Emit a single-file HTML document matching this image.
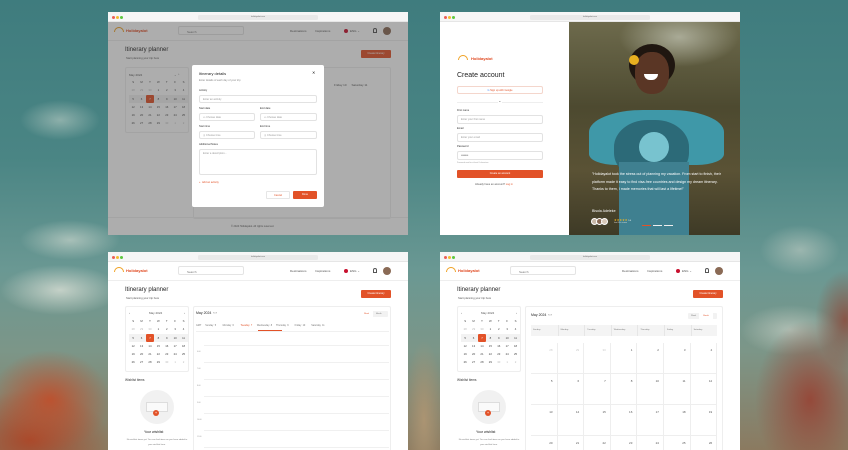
<!DOCTYPE html>
<html><head><meta charset="utf-8"><style>
*{box-sizing:border-box;margin:0;padding:0}
body{width:848px;height:450px;overflow:hidden;position:relative;font-family:"Liberation Sans",sans-serif;
background:
radial-gradient(ellipse 60px 50px at 50px 400px,rgba(190,80,45,.95),transparent),
radial-gradient(ellipse 80px 50px at 30px 440px,rgba(170,70,40,.95),transparent),
radial-gradient(ellipse 55px 80px at 810px 400px,rgba(150,70,55,.95),transparent),
radial-gradient(ellipse 30px 50px at 845px 320px,rgba(140,70,55,.8),transparent),
radial-gradient(ellipse 60px 25px at 60px 290px,rgba(225,228,218,.75),transparent),
radial-gradient(ellipse 50px 20px at 70px 240px,rgba(215,222,212,.6),transparent),
radial-gradient(ellipse 50px 25px at 790px 330px,rgba(210,215,205,.6),transparent),
radial-gradient(ellipse 40px 25px at 800px 250px,rgba(210,215,205,.5),transparent),
radial-gradient(ellipse 40px 20px at 60px 120px,rgba(210,220,210,.5),transparent),
radial-gradient(ellipse 20px 80px at 424px 420px,rgba(175,150,115,.9),transparent),
linear-gradient(180deg,#3f7c7e 0%,#4a8584 35%,#6a9893 60%,#7c9688 78%,#8b7a60 100%);}
.win{position:absolute;width:300px;background:#fff;overflow:hidden}
.chrome{position:absolute;left:0;top:0;width:300px;height:10px;background:#f6f6f6;border-bottom:1px solid #e6e6e6}
.tl{position:absolute;top:4px;width:3px;height:3px;border-radius:50%}
.url{position:absolute;left:90px;top:2.5px;width:120px;height:5px;background:#e9e9e9;border-radius:1.5px;font-size:2px;color:#666;text-align:center;line-height:5px}
.ab{position:absolute}
.t3{font-size:3px;color:#555}
.nav{position:absolute;left:0;top:10px;width:300px;height:19px;border-bottom:1px solid #eee}
.logo{position:absolute;left:18px;top:6px;font-size:4px;font-weight:bold;color:#e04a22}
.sun{position:absolute;left:-13px;top:-1px;width:10px;height:5px;border-radius:5px 5px 0 0;border:1.2px solid #f0a020;border-bottom:none}
.search{position:absolute;left:70px;top:4px;width:66px;height:9px;border:1px solid #e4e4e4;border-radius:2px;font-size:3px;color:#777;padding:2.5px 0 0 8px}
.btn{position:absolute;background:#e25228;color:#fff;font-size:2.5px;text-align:center;border-radius:1px}
.card{position:absolute;border:1px solid #eee;border-radius:2px;background:#fff}
.mc{display:grid;grid-template-columns:repeat(7,8.4px);grid-auto-rows:8.3px;position:absolute;left:3px;top:13px;font-size:2.8px;color:#444;text-align:center;line-height:8.3px}
.mc .g{color:#bbb}.mc .h{background:#f2f2f2}.mc .s{background:#e25228;color:#fff;border-radius:1px}
.ov{position:absolute;left:0;top:10px;width:300px;height:213px;background:rgba(60,60,60,.42)}
.inp{position:absolute;border:1px solid #e2e2e2;border-radius:2px;font-size:2.6px;color:#999;padding:2.3px 0 0 3px;background:#fff}
.lbl{position:absolute;font-size:2.6px;color:#333}
.hl{position:absolute;height:1px;background:#f0f0f0}
.mg{position:absolute;left:91px;top:91px;display:grid;grid-template-columns:repeat(7,26.6px);grid-auto-rows:31px}
.mg div{border-right:1px solid #eee;border-bottom:1px solid #eee;font-size:3px;color:#555;text-align:right;padding:5px 4px 0 0}
.mg .g{color:#ccc}
</style></head><body>

<!-- ============ TOP LEFT (modal) ============ -->
<div class="win" style="left:108px;top:12px;height:223px">
<div class="chrome"><i class="tl" style="left:4px;background:#ec5f57"></i><i class="tl" style="left:8px;background:#f5bd2f"></i><i class="tl" style="left:12px;background:#5fc73f"></i><div class="url">holidayalot.com</div></div>
<div class="nav"><div class="logo"><i class="sun" style="left:-12px"></i>Holidayalot</div><div class="search">Search</div>
<div class="ab t3" style="left:182px;top:7px">Destinations</div><div class="ab t3" style="left:207px;top:7px">Inspirations</div>
<div class="ab" style="left:236px;top:7px;width:4px;height:4px;border-radius:50%;background:#c8102e"></div><div class="ab t3" style="left:242px;top:7px">ENG ⌄</div>
<div class="ab" style="left:265px;top:6px;width:4px;height:5px;border:0.8px solid #555;border-radius:2px 2px 0 0"></div>
<div class="ab" style="left:275px;top:5px;width:8px;height:8px;border-radius:50%;background:#8a6a55"></div></div>
<div class="ab" style="left:17px;top:35px;font-size:6px;color:#222">Itinerary planner</div>
<div class="ab t3" style="left:18px;top:45px;font-size:2.7px">Start planning your trip here</div>
<div class="btn" style="left:253px;top:38px;width:30px;height:8px;line-height:8px">Create itinerary</div>
<div class="card" style="left:17px;top:55px;width:64px;height:66px"><div class="ab t3" style="left:3px;top:5px">May 2024</div><div class="ab t3" style="left:48px;top:5px">⌄ ⌃</div>
<div class="mc" style="top:10px"><span>S</span><span>M</span><span>T</span><span>W</span><span>T</span><span>F</span><span>S</span><span class="g">28</span><span class="g">29</span><span class="g">30</span><span>1</span><span>2</span><span>3</span><span>4</span><span class="h">5</span><span class="h">6</span><span class="s">7</span><span class="h">8</span><span class="h">9</span><span class="h">10</span><span class="h">11</span><span>12</span><span>13</span><span>14</span><span>15</span><span>16</span><span>17</span><span>18</span><span>19</span><span>20</span><span>21</span><span>22</span><span>23</span><span>24</span><span>25</span><span>26</span><span>27</span><span>28</span><span>29</span><span class="g">30</span><span class="g">1</span><span class="g">2</span></div></div>
<div class="card" style="left:85px;top:55px;width:198px;height:152px"><div class="ab t3" style="left:140px;top:15px">Friday 10 &nbsp;&nbsp;&nbsp;&nbsp; Saturday 11</div></div>
<div class="hl" style="left:0;top:205px;width:300px"></div>
<div class="ab t3" style="left:123px;top:213px;font-size:2.5px">© 2024 Holidayalot. All rights reserved.</div>
<div class="ov"></div>
<div class="ab" style="left:84px;top:53px;width:132px;height:142px;background:#fff;border-radius:2px">
<div class="ab" style="left:7px;top:6px;font-size:4px;color:#222">Itinerary details</div>
<div class="ab" style="left:120px;top:5px;font-size:4px;color:#222">✕</div>
<div class="ab t3" style="left:7px;top:14px;font-size:2.6px;color:#888">Enter details of each day of your trip</div>
<div class="lbl" style="left:7px;top:24px">Activity</div>
<div class="inp" style="left:7px;top:30px;width:118px;height:8px">Enter an activity</div>
<div class="lbl" style="left:7px;top:42px">Start date</div><div class="lbl" style="left:68px;top:42px">End date</div>
<div class="inp" style="left:7px;top:48px;width:56px;height:8px">▭ Choose date</div><div class="inp" style="left:68px;top:48px;width:57px;height:8px">▭ Choose date</div>
<div class="lbl" style="left:7px;top:60px">Start time</div><div class="lbl" style="left:68px;top:60px">End time</div>
<div class="inp" style="left:7px;top:66px;width:56px;height:8px">◷ Choose time</div><div class="inp" style="left:68px;top:66px;width:57px;height:8px">◷ Choose time</div>
<div class="lbl" style="left:7px;top:78px">Additional Notes</div>
<div class="inp" style="left:7px;top:84px;width:118px;height:26px">Enter a description...</div>
<div class="ab" style="left:7px;top:116px;font-size:2.6px;color:#e25228">+ &nbsp;Add an activity</div>
<div class="ab" style="left:74px;top:126px;width:24px;height:8px;border:1px solid #e6e6e6;border-radius:1px;font-size:2.6px;color:#e25228;text-align:center;line-height:7px">Cancel</div>
<div class="btn" style="left:101px;top:126px;width:24px;height:8px;line-height:8px">Done</div>
</div>
</div>

<!-- ============ TOP RIGHT (signup) ============ -->
<div class="win" style="left:440px;top:12px;height:223px">
<div class="chrome"><i class="tl" style="left:4px;background:#ec5f57"></i><i class="tl" style="left:8px;background:#f5bd2f"></i><i class="tl" style="left:12px;background:#5fc73f"></i><div class="url">holidayalot.com</div></div>
<div class="logo" style="position:absolute;left:31px;top:44px"><i class="sun"></i>Holidayalot</div>
<div class="ab" style="left:17px;top:60px;font-size:7px;color:#222">Create account</div>
<div class="ab" style="left:17px;top:74px;width:86px;height:8px;border:1px solid #f4d6cc;border-radius:2px;font-size:2.5px;color:#e25228;text-align:center;line-height:7px"><span style="color:#4285f4">G</span> Sign up with Google</div>
<div class="hl" style="left:17px;top:90px;width:86px;background:#eee"></div><div class="ab t3" style="left:58px;top:89px;font-size:2px;background:#fff;padding:0 1px">or</div>
<div class="lbl" style="left:17px;top:97px">First name</div><div class="inp" style="left:17px;top:103px;width:86px;height:9px">Enter your first name</div>
<div class="lbl" style="left:17px;top:115px">Email</div><div class="inp" style="left:17px;top:121px;width:86px;height:9px">Enter your email</div>
<div class="lbl" style="left:17px;top:133px">Password</div><div class="inp" style="left:17px;top:139px;width:86px;height:9px;color:#333">••••••••</div>
<div class="ab" style="left:17px;top:150px;font-size:1.8px;color:#999">Password must be at least 8 characters</div>
<div class="btn" style="left:17px;top:158px;width:86px;height:8px;line-height:8px">Create an account</div>
<div class="ab" style="left:35px;top:171px;font-size:2.6px;color:#555">Already have an account? <span style="color:#e25228">Log in</span></div>
<div class="ab" style="left:129px;top:10px;width:171px;height:213px;overflow:hidden;background:
radial-gradient(ellipse 60px 30px at 110px 15px,#a9aa96,transparent),
linear-gradient(180deg,#6d6a4c 0%,#4d4a30 40%,#5a5235 70%,#3e3a26 100%)">
<div class="ab" style="left:20px;top:88px;width:135px;height:55px;border-radius:40% 40% 20% 20%;background:#3f98a8"></div>
<div class="ab" style="left:45px;top:98px;width:75px;height:60px;border-radius:45%;background:#2c6a78"></div>
<div class="ab" style="left:70px;top:110px;width:30px;height:30px;border-radius:50%;background:#78c3cf"></div>
<div class="ab" style="left:50px;top:140px;width:70px;height:80px;background:#3f8090"></div>
<div class="ab" style="left:60px;top:22px;width:46px;height:42px;border-radius:50%;background:#1f1610"></div>
<div class="ab" style="left:66px;top:30px;width:34px;height:42px;border-radius:45%;background:#5a3625"></div>
<div class="ab" style="left:60px;top:33px;width:10px;height:10px;border-radius:50%;background:#e8b020"></div>
<div class="ab" style="left:75px;top:52px;width:14px;height:6px;border-radius:0 0 7px 7px;background:#fff"></div>
<div class="ab" style="left:23px;top:149px;width:135px;font-size:3.6px;line-height:7.6px;color:#fff">"Holidayalot took the stress out of planning my vacation. From start to finish, their platform made it easy to find visa-free countries and design my dream itinerary. Thanks to them, I made memories that will last a lifetime!"</div>
<div class="ab" style="left:23px;top:187px;font-size:3.6px;color:#fff">Bisola Adeleke</div>
<div class="ab" style="left:22px;top:196px;width:22px;height:7px"><i class="ab" style="left:0;width:7px;height:7px;border-radius:50%;background:#c9b8a8;border:1px solid #fff"></i><i class="ab" style="left:5px;width:7px;height:7px;border-radius:50%;background:#8a6a55;border:1px solid #fff"></i><i class="ab" style="left:10px;width:7px;height:7px;border-radius:50%;background:#d8c8b8;border:1px solid #fff"></i></div>
<div class="ab" style="left:45px;top:196px;font-size:3px;color:#f5b820">★★★★★ <span style="color:#fff;font-size:2px">5.0</span></div>
<div class="ab" style="left:45px;top:201px;font-size:1.6px;color:#ddd">from 200+ reviews</div>
<div class="ab" style="left:73px;top:203px;width:9px;height:1.3px;background:#e25228"></div><div class="ab" style="left:84px;top:203px;width:9px;height:1.3px;background:#eee"></div><div class="ab" style="left:95px;top:203px;width:9px;height:1.3px;background:#eee"></div>
</div>
</div>

<!-- ============ BOTTOM LEFT (week) ============ -->
<div class="win" style="left:108px;top:252px;height:198px">
<div class="chrome"><i class="tl" style="left:4px;background:#ec5f57"></i><i class="tl" style="left:8px;background:#f5bd2f"></i><i class="tl" style="left:12px;background:#5fc73f"></i><div class="url">holidayalot.com</div></div>
<div class="nav"><div class="logo"><i class="sun" style="left:-12px"></i>Holidayalot</div><div class="search">Search</div>
<div class="ab t3" style="left:182px;top:7px">Destinations</div><div class="ab t3" style="left:207px;top:7px">Inspirations</div>
<div class="ab" style="left:236px;top:7px;width:4px;height:4px;border-radius:50%;background:#c8102e"></div><div class="ab t3" style="left:242px;top:7px">ENG ⌄</div>
<div class="ab" style="left:265px;top:6px;width:4px;height:5px;border:0.8px solid #555;border-radius:2px 2px 0 0"></div>
<div class="ab" style="left:275px;top:5px;width:8px;height:8px;border-radius:50%;background:#8a6a55"></div></div>
<div class="ab" style="left:17px;top:35px;font-size:6px;color:#222">Itinerary planner</div>
<div class="ab t3" style="left:18px;top:45px;font-size:2.7px">Start planning your trip here</div>
<div class="btn" style="left:253px;top:38px;width:30px;height:8px;line-height:8px">Create itinerary</div>
<div class="card" style="left:17px;top:54px;width:64px;height:66px"><div class="ab t3" style="left:3px;top:4px">‹</div><div class="ab t3" style="left:23px;top:4px">May 2024</div><div class="ab t3" style="left:58px;top:4px">›</div>
<div class="mc" style="top:10px"><span>S</span><span>M</span><span>T</span><span>W</span><span>T</span><span>F</span><span>S</span><span class="g">28</span><span class="g">29</span><span class="g">30</span><span>1</span><span>2</span><span>3</span><span>4</span><span class="h">5</span><span class="h">6</span><span class="s">7</span><span class="h">8</span><span class="h">9</span><span class="h">10</span><span class="h">11</span><span>12</span><span>13</span><span>14</span><span>15</span><span>16</span><span>17</span><span>18</span><span>19</span><span>20</span><span>21</span><span>22</span><span>23</span><span>24</span><span>25</span><span>26</span><span>27</span><span>28</span><span>29</span><span class="g">30</span><span class="g">1</span><span class="g">2</span></div></div>
<div class="ab" style="left:17px;top:126px;font-size:3.2px;color:#333">Wishlist items</div>
<div class="ab" style="left:32px;top:138px;width:34px;height:34px;border-radius:50%;background:#f1f1f1"></div>
<div class="ab" style="left:38px;top:150px;width:22px;height:10px;border:1px solid #ddd;background:#fafafa"></div>
<div class="ab" style="left:45px;top:158px;width:6px;height:6px;border-radius:50%;background:#e25228;color:#fff;font-size:4px;line-height:6px;text-align:center">+</div>
<div class="ab" style="left:36px;top:178px;font-size:3.5px;color:#222">Your wishlist</div>
<div class="ab" style="left:17px;top:186px;width:64px;font-size:2.2px;line-height:4.5px;color:#777;text-align:center">No wishlist items yet. You can find items on you have added to your wishlist here.</div>
<div class="card" style="left:85px;top:54px;width:198px;height:150px">
<div class="ab" style="left:2px;top:4px;font-size:3.5px;color:#222">May 2024 &nbsp;‹ ›</div>
<div class="ab" style="left:166px;top:4px;width:28px;height:6px;background:#f2f2f2;border-radius:1px;font-size:2px;line-height:6px"><span style="display:inline-block;width:13px;background:#fff;color:#e25228;text-align:center">Week</span><span style="color:#777;padding-left:3px">Month</span></div>
<div class="ab" style="left:2px;top:17px;font-size:2.4px;color:#777;white-space:pre">GMT      Sunday  5          Monday  6          <span style="color:#e25228">Tuesday  7</span>       Wednesday  8      Thursday  9         Friday  10         Saturday  11</div>
<div class="ab" style="left:64px;top:23px;width:24px;height:1px;background:#e25228"></div>
<div class="hl" style="left:2px;top:24px;width:193px"></div>
<div class="hl" style="left:10px;top:38px;width:185px"></div><div class="hl" style="left:10px;top:55px;width:185px"></div><div class="hl" style="left:10px;top:72px;width:185px"></div><div class="hl" style="left:10px;top:89px;width:185px"></div><div class="hl" style="left:10px;top:106px;width:185px"></div><div class="hl" style="left:10px;top:123px;width:185px"></div><div class="hl" style="left:10px;top:140px;width:185px"></div>
<div class="ab" style="left:3px;top:37px;font-size:1.8px;color:#999;line-height:17px">6:00<br>7:00<br>8:00<br>9:00<br>10:00<br>11:00<br>12:00</div>
</div>
</div>

<!-- ============ BOTTOM RIGHT (month) ============ -->
<div class="win" style="left:440px;top:252px;height:198px">
<div class="chrome"><i class="tl" style="left:4px;background:#ec5f57"></i><i class="tl" style="left:8px;background:#f5bd2f"></i><i class="tl" style="left:12px;background:#5fc73f"></i><div class="url">holidayalot.com</div></div>
<div class="nav"><div class="logo"><i class="sun" style="left:-12px"></i>Holidayalot</div><div class="search">Search</div>
<div class="ab t3" style="left:182px;top:7px">Destinations</div><div class="ab t3" style="left:207px;top:7px">Inspirations</div>
<div class="ab" style="left:236px;top:7px;width:4px;height:4px;border-radius:50%;background:#c8102e"></div><div class="ab t3" style="left:242px;top:7px">ENG ⌄</div>
<div class="ab" style="left:265px;top:6px;width:4px;height:5px;border:0.8px solid #555;border-radius:2px 2px 0 0"></div>
<div class="ab" style="left:275px;top:5px;width:8px;height:8px;border-radius:50%;background:#8a6a55"></div></div>
<div class="ab" style="left:17px;top:35px;font-size:6px;color:#222">Itinerary planner</div>
<div class="ab t3" style="left:18px;top:45px;font-size:2.7px">Start planning your trip here</div>
<div class="btn" style="left:253px;top:38px;width:30px;height:8px;line-height:8px">Create itinerary</div>
<div class="card" style="left:17px;top:54px;width:64px;height:66px"><div class="ab t3" style="left:3px;top:4px">‹</div><div class="ab t3" style="left:23px;top:4px">May 2024</div><div class="ab t3" style="left:58px;top:4px">›</div>
<div class="mc" style="top:10px"><span>S</span><span>M</span><span>T</span><span>W</span><span>T</span><span>F</span><span>S</span><span class="g">28</span><span class="g">29</span><span class="g">30</span><span>1</span><span>2</span><span>3</span><span>4</span><span class="h">5</span><span class="h">6</span><span class="s">7</span><span class="h">8</span><span class="h">9</span><span class="h">10</span><span class="h">11</span><span>12</span><span>13</span><span>14</span><span>15</span><span>16</span><span>17</span><span>18</span><span>19</span><span>20</span><span>21</span><span>22</span><span>23</span><span>24</span><span>25</span><span>26</span><span>27</span><span>28</span><span>29</span><span class="g">30</span><span class="g">1</span><span class="g">2</span></div></div>
<div class="ab" style="left:17px;top:126px;font-size:3.2px;color:#333">Wishlist items</div>
<div class="ab" style="left:32px;top:138px;width:34px;height:34px;border-radius:50%;background:#f1f1f1"></div>
<div class="ab" style="left:38px;top:150px;width:22px;height:10px;border:1px solid #ddd;background:#fafafa"></div>
<div class="ab" style="left:45px;top:158px;width:6px;height:6px;border-radius:50%;background:#e25228;color:#fff;font-size:4px;line-height:6px;text-align:center">+</div>
<div class="ab" style="left:36px;top:178px;font-size:3.5px;color:#222">Your wishlist</div>
<div class="ab" style="left:17px;top:186px;width:64px;font-size:2.2px;line-height:4.5px;color:#777;text-align:center">No wishlist items yet. You can find items on you have added to your wishlist here.</div>
<div class="card" style="left:85px;top:54px;width:198px;height:150px"></div>
<div class="ab" style="left:91px;top:61px;font-size:3.5px;color:#222">May 2024 &nbsp;‹ ›</div>
<div class="ab" style="left:248px;top:61px;width:29px;height:6px;background:#f2f2f2;border-radius:1px;font-size:2px;line-height:6px"><span style="color:#777;padding-left:3px">Week</span><span style="display:inline-block;width:14px;margin-left:3px;background:#fff;color:#e25228;text-align:center">Month</span></div>
<div class="ab" style="left:91px;top:73px;width:186px;height:11px;background:#f4f4f4;display:grid;grid-template-columns:repeat(7,26.6px);font-size:2.2px;color:#777;line-height:11px"><span style="padding-left:2px">Sunday</span><span style="padding-left:2px;border-left:1px solid #e6e6e6">Monday</span><span style="padding-left:2px;border-left:1px solid #e6e6e6">Tuesday</span><span style="padding-left:2px;border-left:1px solid #e6e6e6">Wednesday</span><span style="padding-left:2px;border-left:1px solid #e6e6e6">Thursday</span><span style="padding-left:2px;border-left:1px solid #e6e6e6">Friday</span><span style="padding-left:2px;border-left:1px solid #e6e6e6">Saturday</span></div>
<div class="mg"><div class="g">28</div><div class="g">29</div><div class="g">30</div><div>1</div><div>2</div><div>3</div><div>4</div><div>5</div><div>6</div><div>7</div><div>8</div><div>10</div><div>11</div><div>12</div><div>13</div><div>14</div><div>15</div><div>16</div><div>17</div><div>18</div><div>19</div><div>20</div><div>21</div><div>22</div><div>23</div><div>24</div><div>25</div><div>26</div></div>
</div>
</body></html>
